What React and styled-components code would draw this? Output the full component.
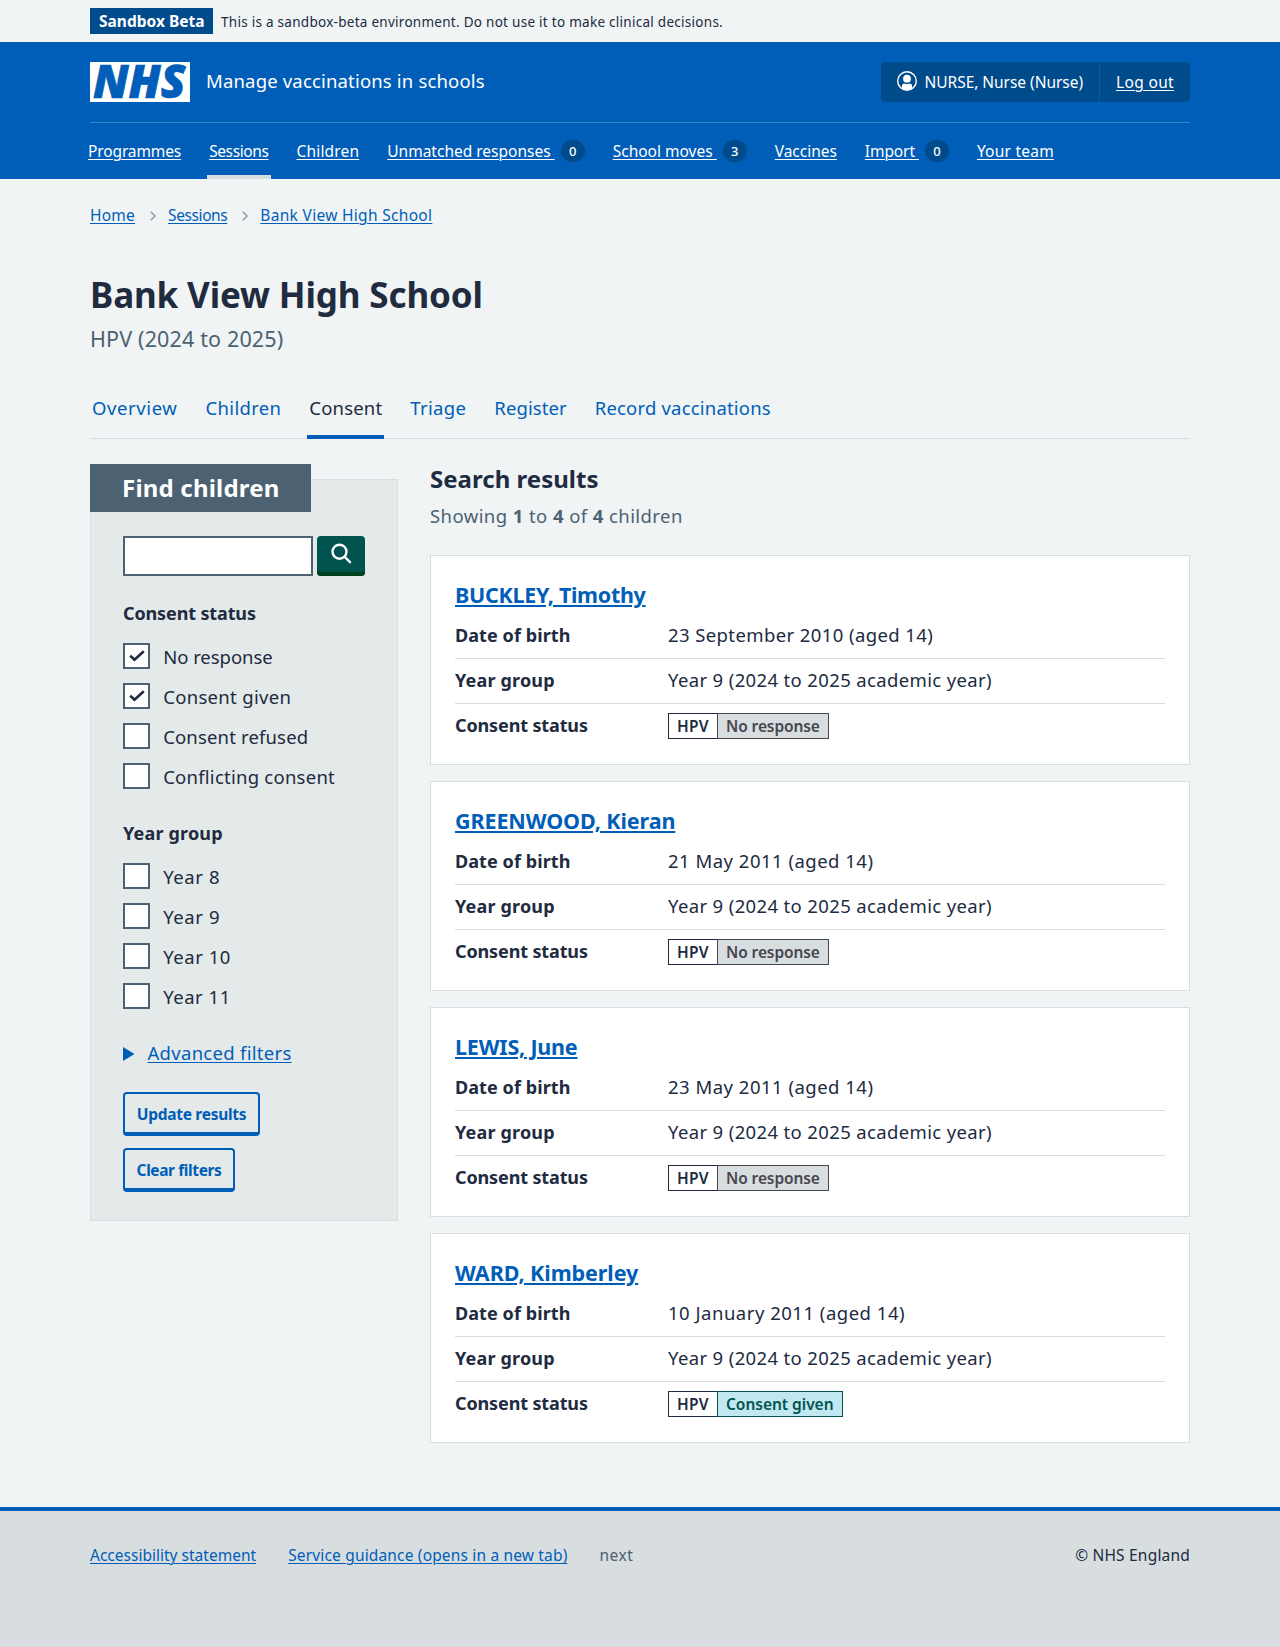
import React from "react";
import styled, { createGlobalStyle, css } from "styled-components";

const c = {
  blue: "#005eb8",
  darkBlue: "#004b8c",
  ink: "#212b3f",
  slate: "#4c6272",
  page: "#f0f4f5",
  panel: "#e4e9e9",
  line: "#d8dde0",
  green: "#00534f",
  greenShadow: "#00401e",
};

const Global = createGlobalStyle`
  *, *::before, *::after { box-sizing: border-box; }
  body {
    margin: 0;
    background: ${c.page};
    color: ${c.ink};
    font-family: "Noto Sans", "Open Sans", sans-serif;
    font-size: 18.5px;
    font-weight: 400;
  }
  h1, h2, h3, p, ul, ol, dl, dd, dt { margin: 0; padding: 0; }
  ul, ol { list-style: none; }
`;

const tracked = css`
  letter-spacing: ${(p) => p.$ls || 0}px;
  white-space: pre;
`;

const Container = styled.div`
  width: 1100px;
  margin: 0 auto;
`;

/* Environment banner */
const Banner = styled(Container)`
  display: flex;
  align-items: center;
  gap: 8px;
  height: 42px;
`;
const BannerTag = styled.strong`
  width: 123px;
  height: 26px;
  padding-left: 9px;
  background: ${c.darkBlue};
  color: #fff;
  font-size: 15.5px;
  font-weight: 700;
  line-height: 26px;
  ${tracked}
`;
const BannerText = styled.span`
  font-size: 13.5px;
  line-height: 20px;
  padding-top: 1px;
  ${tracked}
`;

/* Header */
const Header = styled.header`
  background: ${c.blue};
  color: #fff;
`;
const Masthead = styled(Container)`
  display: flex;
  align-items: center;
  height: 81px;
  border-bottom: 1px solid #3384c6;
`;
const Logo = styled.svg`
  display: block;
  overflow: visible;
  width: 100px;
  height: 40px;
  margin-right: 16px;
`;
const ServiceName = styled.span`
  flex: 1;
  padding-bottom: 2px;
  font-size: 18.5px;
  line-height: 28px;
  ${tracked}
`;
const Account = styled.div`
  display: flex;
  height: 40px;
  border-radius: 4px;
  background: ${c.darkBlue};
  font-size: 15.5px;
  line-height: 38px;
`;
const AccountItem = styled.div`
  display: flex;
  align-items: center;
  padding: 0 16px;
  & + & { border-left: 1px solid ${c.blue}; }
  svg { display: block; margin: 0 7.5px 2px 0; }
`;
const AccountText = styled.span`
  padding-bottom: 1px;
  text-decoration: ${(p) => (p.$link ? "underline" : "none")};
  text-decoration-thickness: 1px;
  text-underline-offset: 2px;
  ${tracked}
`;
const NavList = styled.ul`
  display: flex;
  gap: 24px;
  width: 1108px;
  height: 56px;
  margin: 0 auto;
`;
const NavItem = styled.li`
  display: flex;
  align-items: center;
  gap: 6px;
  padding: 4px 2px 0;
  border-bottom: 4px solid ${(p) => (p.$current ? c.line : "transparent")};
`;
const NavLink = styled.a`
  font-size: 15.5px;
  line-height: 24px;
  text-decoration: underline 1px;
  text-underline-offset: 2px;
  ${tracked}
`;
const Count = styled.span`
  width: 24px;
  height: 22px;
  border-radius: 12px;
  background: ${c.darkBlue};
  font-size: 13px;
  font-weight: 500;
  line-height: 23px;
  text-align: center;
`;

/* Breadcrumb and page heading */
const Crumbs = styled.ol`
  display: flex;
  align-items: center;
  height: 24px;
  margin-top: 24px;
  color: ${c.blue};
  font-size: 15.5px;
  line-height: 24px;
  svg { display: block; margin: 1px 12px 0 15px; }
`;
const Crumb = styled.li`
  text-decoration: underline 1px;
  text-underline-offset: 2px;
  ${tracked}
`;
const Title = styled.h1`
  margin-top: 46px;
  font-size: 35px;
  font-weight: 700;
  line-height: 44px;
  ${tracked}
`;
const Caption = styled.p`
  margin-top: 6px;
  color: ${c.slate};
  font-size: 21.5px;
  line-height: 32px;
  ${tracked}
`;

/* Secondary navigation */
const Tabs = styled.ul`
  display: flex;
  gap: 24px;
  height: 59px;
  margin-top: 25px;
  box-shadow: inset 0 -1px 0 ${c.line};
`;
const Tab = styled.li`
  padding: 0 2px;
  border-bottom: 4px solid ${(p) => (p.$current ? c.blue : "transparent")};
  color: ${(p) => (p.$current ? c.ink : c.blue)};
  line-height: 55px;
  ${tracked}
`;

const Columns = styled.div`
  display: grid;
  grid-template-columns: 308px 760px;
  gap: 32px;
  align-items: start;
  margin-top: 25px;
`;

/* Filters */
const Panel = styled.section`
  margin-top: 15px;
  padding: 0 32px 28px;
  border: 1px solid ${c.line};
  background: ${c.panel};
`;
const PanelHeading = styled.h2`
  width: 221px;
  height: 48px;
  margin: -16px 0 0 -33px;
  padding-left: 32px;
  background: ${c.slate};
  color: #fff;
  font-size: 24px;
  font-weight: 700;
  line-height: 48px;
  ${tracked}
`;
const SearchRow = styled.div`
  display: flex;
  gap: 4px;
  margin-top: 24px;
`;
const SearchInput = styled.input`
  width: 190px;
  height: 40px;
  border: 2px solid ${c.slate};
  border-radius: 0;
  background: #fff;
`;
const SearchButton = styled.button`
  display: flex;
  justify-content: center;
  width: 48px;
  height: 40px;
  padding: 6px 0 0;
  border: 0;
  border-radius: 4px;
  background: ${c.green};
  box-shadow: inset 0 -4px 0 ${c.greenShadow};
`;
const Group = styled.div`
  margin-top: 23px;
`;
const GroupHeading = styled.h3`
  margin-bottom: 9px;
  font-size: 18px;
  font-weight: 700;
  line-height: 28px;
  ${tracked}
`;
const Option = styled.label`
  display: flex;
  align-items: center;
  gap: 13.5px;
  height: 40px;
`;
const Box = styled.span`
  display: flex;
  width: 26.67px;
  height: 26.67px;
  border: 2px solid ${c.slate};
  background: #fff;
  svg { display: block; margin: 4px 0 0 4px; }
`;
const OptionText = styled.span`
  padding-top: 2px;
  line-height: 28px;
  ${tracked}
`;
const Advanced = styled.div`
  display: flex;
  align-items: center;
  gap: 13px;
  height: 28px;
  margin-top: 23px;
  color: ${c.blue};
  svg { display: block; margin-top: 1px; }
`;
const AdvancedText = styled.span`
  text-decoration: underline 1px;
  text-underline-offset: 2px;
  line-height: 28px;
  ${tracked}
`;
const Actions = styled.div`
  display: flex;
  flex-direction: column;
  align-items: flex-start;
  gap: 12px;
  margin-top: 25px;
`;
const OutlineButton = styled.button`
  width: ${(p) => p.$width}px;
  height: 44px;
  padding: 2px 0 0;
  border: 2px solid ${c.blue};
  border-bottom-width: 4px;
  border-radius: 4px;
  background: transparent;
  color: ${c.blue};
  font: 700 15.5px/28px "Noto Sans", sans-serif;
  ${tracked}
`;

/* Results */
const ResultsHeading = styled.h2`
  font-size: 24px;
  font-weight: 700;
  line-height: 30px;
  ${tracked}
`;
const Showing = styled.p`
  margin-top: 8px;
  color: ${c.slate};
  line-height: 28px;
  ${tracked}
  b { font-weight: 700; }
`;
const CardList = styled.div`
  display: grid;
  gap: 16px;
  margin-top: 25px;
`;
const Card = styled.article`
  height: 210px;
  padding: 25px 24px 23px;
  border: 1px solid ${c.line};
  background: #fff;
`;
const CardTitle = styled.h3`
  margin-bottom: 5px;
  color: ${c.blue};
  font-size: 21.5px;
  font-weight: 700;
  line-height: 28px;
  text-decoration: underline 2px;
  text-underline-offset: 2px;
  ${tracked}
`;
const Fields = styled.dl`
  display: grid;
`;
const Field = styled.div`
  display: grid;
  grid-template-columns: 213px 1fr;
  padding: 7px 0 9px;
  line-height: 28px;
  &:not(:last-child) { border-bottom: 1px solid ${c.line}; }
`;
const FieldName = styled.dt`
  font-size: 18px;
  font-weight: 700;
  ${tracked}
`;
const FieldValue = styled.dd`
  ${tracked}
`;
const Tags = styled.dd`
  display: flex;
  align-items: center;
  height: 28px;
  padding-top: 2px;
`;
const tones = {
  plain: { bg: "#fff", fg: c.ink, width: 49 },
  grey: { bg: c.line, fg: "#47464f", width: 112 },
  aqua: { bg: "#c1e8f0", fg: "#00534f", width: 126 },
};
const Tag = styled.strong`
  width: ${(p) => tones[p.$tone].width}px;
  height: 26px;
  padding-left: 8px;
  border: 1px solid ${(p) => tones[p.$tone].fg};
  border-right-width: ${(p) => (p.$tone === "plain" ? 0 : 1)}px;
  background: ${(p) => tones[p.$tone].bg};
  color: ${(p) => tones[p.$tone].fg};
  font-size: 15.5px;
  font-weight: 600;
  line-height: 25px;
  ${tracked}
`;

/* Footer */
const Footer = styled.footer`
  height: 140px;
  margin-top: 64px;
  padding-top: 32px;
  border-top: 4px solid ${c.blue};
  background: ${c.line};
  font-size: 15.5px;
  line-height: 24px;
`;
const FooterRow = styled(Container)`
  display: flex;
  gap: 32px;
`;
const FooterLink = styled.a`
  color: ${c.blue};
  text-decoration: underline 1px;
  text-underline-offset: 2px;
  ${tracked}
`;
const FooterNote = styled.span`
  color: ${c.slate};
  ${tracked}
`;
const Copyright = styled.span`
  margin-left: auto;
  ${tracked}
`;

const Chevron = () => (
  <svg width="6" height="10" viewBox="0 0 6 10" fill="none" stroke="#8a979f" strokeWidth="1.4">
    <path d="M0.8 0.8 5 5 0.8 9.2" />
  </svg>
);

const navItems = [
  ["Programmes", -0.12],
  ["Sessions", -0.39],
  ["Children", 0.18],
  ["Unmatched responses ", 0, "0"],
  ["School moves ", 0.01, "3"],
  ["Vaccines", -0.03],
  ["Import ", -0.09, "0"],
  ["Your team", 0.23],
];
const tabs = [
  ["Overview", 0.6],
  ["Children", 0.33],
  ["Consent", 0.18],
  ["Triage", 0.34],
  ["Register", 0.08],
  ["Record vaccinations", 0.19],
];
const statuses = [
  ["No response", -0.03, true],
  ["Consent given", 0.32, true],
  ["Consent refused", 0.16],
  ["Conflicting consent", 0.25],
];
const years = [
  ["Year 8", 0.6],
  ["Year 9", 0.6],
  ["Year 10", 0.55],
  ["Year 11", 0.52],
];
const children = [
  ["BUCKLEY, Timothy", -0.3, "23 September 2010 (aged 14)", 0.4],
  ["GREENWOOD, Kieran", -0.1, "21 May 2011 (aged 14)", 0.49],
  ["LEWIS, June", -0.2, "23 May 2011 (aged 14)", 0.49],
  ["WARD, Kimberley", -0.07, "10 January 2011 (aged 14)", 0.51, true],
];

const Checks = ({ title, ls, options }) => (
  <Group>
    <GroupHeading $ls={ls}>{title}</GroupHeading>
    {options.map(([label, spacing, checked]) => (
      <Option key={label}>
        <Box>
          {checked && (
            <svg width="16" height="13" viewBox="0 0 16 13" fill="none" stroke={c.ink} strokeWidth="2.6">
              <path d="M1.2 6.8 5.500 10.800 14.800 2.200" />
            </svg>
          )}
        </Box>
        <OptionText $ls={spacing}>{label}</OptionText>
      </Option>
    ))}
  </Group>
);

export default function App() {
  return (
    <>
      <Global />
      <Banner>
        <BannerTag $ls={0.02}>Sandbox Beta</BannerTag>
        <BannerText $ls={0.275}>This is a sandbox-beta environment. Do not use it to make clinical decisions.</BannerText>
      </Banner>
      <Header>
        <Masthead>
          <Logo viewBox="0 0 100 40">
            <rect width="100" height="40" fill="#fff" />
            <text
              x="3" y="36" fontFamily="Open Sans, Noto Sans, sans-serif" fontSize="45.5" fontWeight="800"
              fontStyle="italic" fill={c.blue} stroke={c.blue} strokeWidth="0.7" textLength="92.500" lengthAdjust="spacingAndGlyphs"
            >
              NHS
            </text>
          </Logo>
          <ServiceName $ls={0.17}>Manage vaccinations in schools</ServiceName>
          <Account>
            <AccountItem>
              <svg width="20" height="20" viewBox="0 0 20 20">
                <circle cx="10" cy="10" r="9.3" fill="none" stroke="#fff" strokeWidth="1.4" />
                <circle cx="10" cy="7.7" r="3.9" fill="#fff" />
                <path d="M4.8 17.2V15.4C4.8 13.6 6 12.5 7.6 12.5C9.1 13.3 10.9 13.3 12.4 12.5C14 12.5 15.2 13.6 15.2 15.4V17.2C12.2 19.4 7.8 19.4 4.8 17.2Z" fill="#fff" />
              </svg>
              <AccountText $ls={-0.04}>NURSE, Nurse (Nurse)</AccountText>
            </AccountItem>
            <AccountItem>
              <AccountText $link $ls={0.34}>Log out</AccountText>
            </AccountItem>
          </Account>
        </Masthead>
        <NavList>
          {navItems.map(([label, ls, count]) => (
            <NavItem key={label} $current={label === "Sessions"}>
              <NavLink $ls={ls}>{label}</NavLink>
              {count && <Count>{count}</Count>}
            </NavItem>
          ))}
        </NavList>
      </Header>
      <Container as="main">
        <Crumbs>
          <Crumb $ls={0.23}>Home</Crumb>
          <Chevron />
          <Crumb $ls={-0.4}>Sessions</Crumb>
          <Chevron />
          <Crumb $ls={0.31}>Bank View High School</Crumb>
        </Crumbs>
        <Title $ls={-0.14}>Bank View High School</Title>
        <Caption $ls={0.15}>HPV (2024 to 2025)</Caption>
        <Tabs>
          {tabs.map(([label, ls]) => (
            <Tab key={label} $ls={ls} $current={label === "Consent"}>{label}</Tab>
          ))}
        </Tabs>
        <Columns>
          <Panel>
            <PanelHeading $ls={0.2}>Find children</PanelHeading>
            <SearchRow>
              <SearchInput aria-label="Search" />
              <SearchButton aria-label="Search">
                <svg width="23" height="23" viewBox="0 0 23 23" fill="none" stroke="#fff" strokeWidth="2.4" strokeLinecap="round">
                  <circle cx="9.5" cy="9.7" r="7" />
                  <path d="M14.7 14.9 20 20.2" />
                </svg>
              </SearchButton>
            </SearchRow>
            <Checks title="Consent status" ls={-0.13} options={statuses} />
            <Checks title="Year group" ls={0.18} options={years} />
            <Advanced>
              <svg width="11.5" height="14" viewBox="0 0 11.5 14"><path d="M0 0 11.5 7 0 14z" fill={c.blue} /></svg>
              <AdvancedText $ls={0.29}>Advanced filters</AdvancedText>
            </Advanced>
            <Actions>
              <OutlineButton $width={137} $ls={-0.28}>Update results</OutlineButton>
              <OutlineButton $width={112} $ls={-0.4}>Clear filters</OutlineButton>
            </Actions>
          </Panel>
          <section>
            <ResultsHeading $ls={0.02}>Search results</ResultsHeading>
            <Showing $ls={0.42}>Showing <b>1</b> to <b>4</b> of <b>4</b> children</Showing>
            <CardList>
              {children.map(([name, nameLs, dob, dobLs, given]) => (
                <Card key={name}>
                  <CardTitle $ls={nameLs}>{name}</CardTitle>
                  <Fields>
                    <Field>
                      <FieldName $ls={0.08}>Date of birth</FieldName>
                      <FieldValue $ls={dobLs}>{dob}</FieldValue>
                    </Field>
                    <Field>
                      <FieldName $ls={0.18}>Year group</FieldName>
                      <FieldValue $ls={0.36}>Year 9 (2024 to 2025 academic year)</FieldValue>
                    </Field>
                    <Field>
                      <FieldName $ls={-0.13}>Consent status</FieldName>
                      <Tags>
                        <Tag $tone="plain" $ls={0.2}>HPV</Tag>
                        {given ? <Tag $tone="aqua" $ls={-0.02}>Consent given</Tag> : <Tag $tone="grey" $ls={-0.1}>No response</Tag>}
                      </Tags>
                    </Field>
                  </Fields>
                </Card>
              ))}
            </CardList>
          </section>
        </Columns>
      </Container>
      <Footer>
        <FooterRow>
          <FooterLink $ls={0.01}>Accessibility statement</FooterLink>
          <FooterLink $ls={0.165}>Service guidance (opens in a new tab)</FooterLink>
          <FooterNote $ls={0.5}>next</FooterNote>
          <Copyright $ls={0.2}>© NHS England</Copyright>
        </FooterRow>
      </Footer>
    </>
  );
}
